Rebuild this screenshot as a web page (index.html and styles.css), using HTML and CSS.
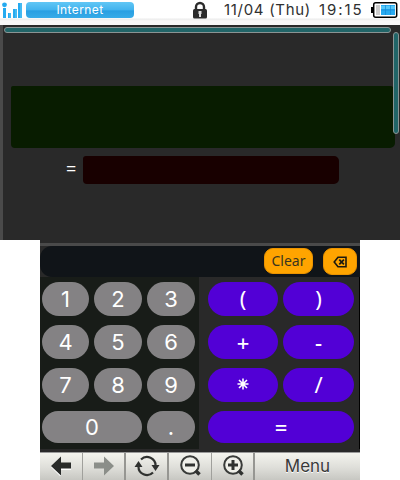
FILE: index.html
```
<!DOCTYPE html>
<html lang="en">
<head>
<meta charset="utf-8">
<title>Calculator</title>
<link rel="stylesheet" href="styles.css">
</head>
<body>
<header class="status">
  <svg class="signal" width="24" height="20" viewBox="0 0 24 20"><g fill="#24aaf0"><circle cx="4.5" cy="4.8" r="2.4"/><path d="M3 8h3v10H3zM8 13h3v5H8zM13 9h4v9h-4zM18 3h4v15h-4z"/></g><path d="M10 13v5M16 9v9M21 3v15" stroke="#62c9f5"/></svg>
  <div class="network">Internet</div>
  <svg class="lock" width="16" height="18" viewBox="0 0 16 18"><path d="M4 9V6a4 4 0 0 1 8 0v3" fill="none" stroke="#2b2b2b" stroke-width="2.4"/><rect x="1" y="8" width="14" height="9.5" rx="1.5" fill="#2b2b2b"/><path d="M6.500 10h3v3H9v3H7v-3h-.5z" fill="#ddd"/></svg>
  <div class="date">11/04 (Thu)</div>
  <div class="time">19:15</div>
  <svg class="battery" width="28" height="18" viewBox="0 0 28 18"><path d="M1 6h3v6H1z" fill="#000"/><rect x="3.7" y="1.7" width="23" height="14.6" rx="2" fill="#fff" stroke="#000" stroke-width="1.5"/><path d="M6 4h4v10H6z" fill="#ccc"/><path d="M11 4h14v10H11z" fill="#28aaf0"/><path d="M11 5h14v3H11z" fill="#55c8fa"/><path d="M15.5 4v10M20.5 4v10M11 9h14" stroke="#1689d5" stroke-width=".7"/></svg>
</header>
<main class="view">
  <div class="expression"></div>
  <div class="answer"><span class="equals">=</span><div class="result"></div></div>
  <div class="scroll-x"></div>
  <div class="scroll-y"></div>
</main>
<section class="touch">
  <div class="display">
    <div class="button clear">Clear</div>
    <div class="button erase"><svg width="15" height="12" viewBox="0 0 15 12"><path d="M5 1.2h8v9.6H5L1.2 6z" fill="none" stroke="#1c1a10" stroke-width="1.6"/><path d="M6.3 3.6l4.6 4.8M10.9 3.6L6.3 8.4" stroke="#1c1a10" stroke-width="1.7"/></svg></div>
  </div>
  <div class="pads">
    <div class="digits">
      <div class="key">1</div><div class="key">2</div><div class="key">3</div>
      <div class="key">4</div><div class="key">5</div><div class="key">6</div>
      <div class="key">7</div><div class="key">8</div><div class="key">9</div>
      <div class="key wide">0</div><div class="key">.</div>
    </div>
    <div class="operators">
      <div class="key">(</div><div class="key">)</div>
      <div class="key sign">+</div><div class="key sign">-</div>
      <div class="key"><svg width="12" height="12" viewBox="0 0 12 12"><path d="M6 .5v11M.5 6h11M2 2l8 8M10 2l-8 8" stroke="#fff" stroke-width="1.6"/></svg></div><div class="key">/</div>
      <div class="key wide sign">=</div>
    </div>
  </div>
  <nav class="toolbar">
    <div class="tool thin"><svg width="22" height="20" viewBox="0 0 22 20"><path d="M1 10L11 0v6h10v7H11v7z" fill="#fff" transform="translate(0 1)"/><path d="M1 10L11 .5V6.5h10v6H11v7z" fill="#292b29"/></svg></div>
    <div class="tool"><svg width="22" height="20" viewBox="0 0 22 20"><path d="M21 10L11 .5V6.5H1v6h10v7z" fill="#8b8e89"/></svg></div>
    <div class="tool"><svg width="26" height="22" viewBox="0 0 26 22"><g fill="none" stroke="#303230" stroke-width="2.2"><path d="M7 4.500A8.500 8.500 0 0 1 21.500 11"/><path d="M19 17.500A8.500 8.500 0 0 1 4.500 11"/></g><path d="M17.500 10H25.500L21.500 16zM.5 12H8.500L4.500 6z" fill="#303230"/></svg></div>
    <div class="tool thin"><svg width="24" height="24" viewBox="0 0 24 24"><circle cx="12" cy="11" r="8.800" fill="#efefe9" stroke="#393b39" stroke-width="2"/><path d="M7 11h10" stroke="#303230" stroke-width="3"/><path d="M17.500 16.500l4 4" stroke="#303230" stroke-width="3.500"/></svg></div>
    <div class="tool"><svg width="24" height="24" viewBox="0 0 24 24"><circle cx="12" cy="11" r="8.800" fill="#efefe9" stroke="#393b39" stroke-width="2"/><path d="M7 11h10M12 6v10" stroke="#303230" stroke-width="3"/><path d="M17.500 16.500l4 4" stroke="#303230" stroke-width="3.500"/></svg></div>
    <div class="tool menu">Menu</div>
  </nav>
</section>
</body>
</html>
```
FILE: styles.css
```
* { box-sizing: border-box; }
body { margin: 0; width: 400px; height: 480px; overflow: hidden; background: #fff; font-family: Inter, sans-serif; }
svg { display: block; flex: none; }
.status { height: 25px; display: flex; align-items: flex-start; background: linear-gradient(#fff 18px, #ececec 19px, #f8f8f8 21px); color: #303030; white-space: nowrap; }
.network { width: 108px; height: 16px; margin: 2px 0 0 2px; border-radius: 4px; background: linear-gradient(#61c7f5, #41b3ee 50%, #299fe2 55%, #36abe8); color: #fff; font: 12px/16px Inter, sans-serif; letter-spacing: .4px; text-align: center; }
.lock { margin: 1px 0 0 58px; }
.date { width: 89px; margin-left: 16px; font-size: 15px; line-height: 20px; letter-spacing: .7px; }
.time { width: 51px; margin-left: 6px; font-size: 15px; line-height: 20px; letter-spacing: 1.9px; }
.battery { margin-top: 1px; }
.view { position: relative; height: 215px; padding: 61px 5px 0 8px; border-left: 3px solid #4a4a4a; background: #292929; }
.expression { height: 62px; border-radius: 2px 5px 5px 4px; background: #081c00; }
.answer { display: flex; margin-top: 8px; }
.equals { width: 72px; padding-left: 55px; color: #fff; font: 18px/24px "Noto Sans", sans-serif; }
.result { width: 256px; height: 28px; border-radius: 3px 5px 5px 4px; background: #180000; }
.scroll-x, .scroll-y { position: absolute; border: 1px solid #8a9494; border-radius: 3px; background: #216568; }
.scroll-x { left: 1px; top: 2px; width: 387px; height: 6px; }
.scroll-y { left: 390px; top: 7px; width: 6px; height: 102px; }
.touch { width: 320px; height: 240px; margin: 0 auto; padding-top: 3px; background: #292929; }
.display { display: flex; height: 34px; padding: 2px 3px 0 224px; border-top: 3px solid #4a4a4a; background: radial-gradient(circle at 12px 12px, #101418 11.5px, #292929 12.5px) 0 0 / 12px 12px no-repeat, radial-gradient(circle at 12px 0, #101418 11.5px, #292929 12.5px) 0 100% / 12px 12px no-repeat, #101418; }
.button { display: flex; align-items: center; justify-content: center; border: 1px solid #eb9300; border-radius: 9px; background: #ffa400; color: #39351f; }
.clear { width: 49px; height: 26px; font: 14px/24px "Noto Sans", sans-serif; padding-bottom: 1px; }
.erase { width: 34px; height: 27px; margin-left: 10px; }
.pads { display: flex; height: 172px; }
.digits, .operators { display: grid; grid-template-rows: 34px 34px 34px 32px; row-gap: 9px; padding-top: 5px; }
.digits { width: 159px; grid-template-columns: 47px 48px 48px; column-gap: 5px; padding-left: 2px; background: #181c18; align-content: start; }
.operators { width: 161px; grid-template-columns: 70px 71px; column-gap: 5px; padding-left: 9px; border-right: 1px solid #000; align-content: start; }
.key { display: flex; align-items: center; justify-content: center; border-radius: 17px; background: #848284; color: #fff; font-size: 22px; line-height: 30px; }
.operators .key { padding-bottom: 2px; background: #5200d6; font-family: "Noto Sans", sans-serif; }
.operators .sign { padding-bottom: 0; font-weight: 500; }
.wide { grid-column: span 2; }
.toolbar { display: flex; height: 28px; margin-top: 3px; border-top: 1px solid #999; background: linear-gradient(#f4f4ee, #deded9 55%, #c7c7c2); }
.tool { display: flex; align-items: center; justify-content: center; width: 43px; border-right: 2px solid #969692; }
.tool svg { margin-top: -1px; }
.thin { border-right: 1px solid #a0a09c; }
.menu { flex: 1; border: 0; padding-bottom: 1px; color: #393939; font: 17px Inter, sans-serif; text-shadow: 0 1px #fff; }
```
